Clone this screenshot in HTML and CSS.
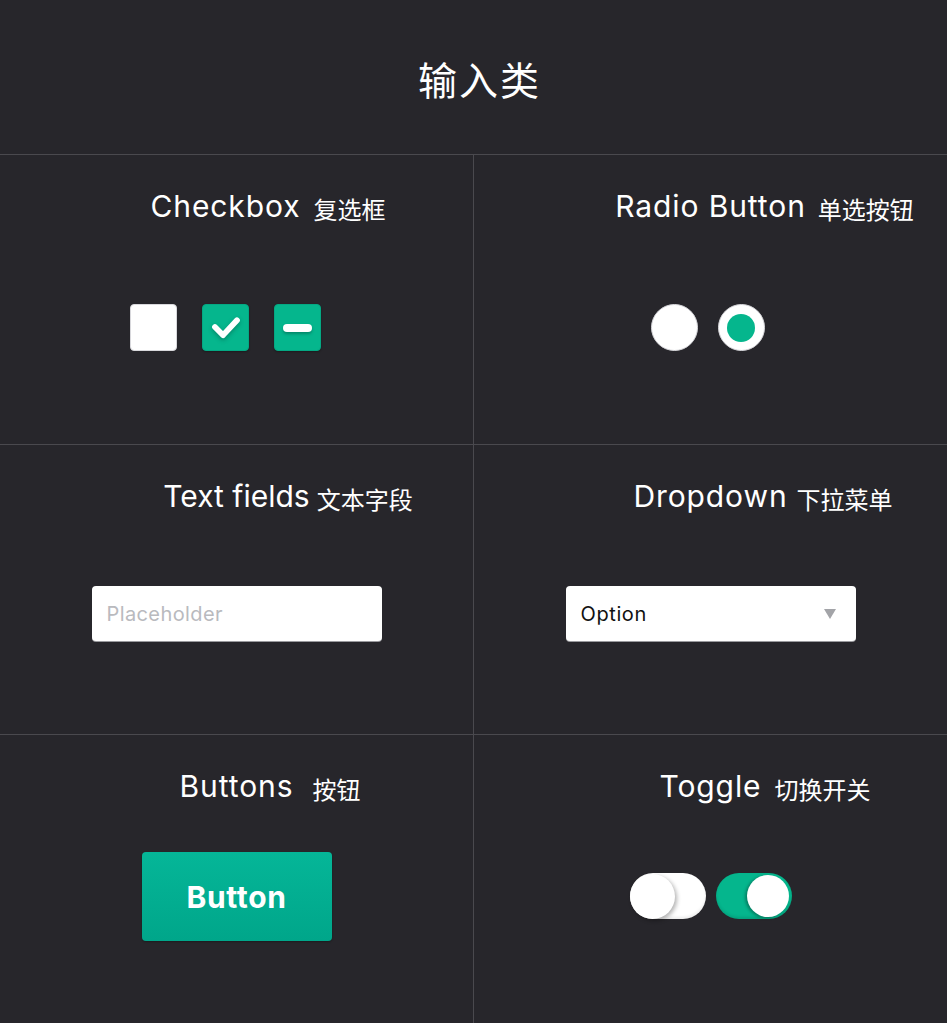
FILE: index.html
```html
<!DOCTYPE html>
<html lang="zh">
<head>
<meta charset="utf-8">
<title>输入类</title>
<link rel="stylesheet" href="styles.css">
</head>
<body>
<header class="page-head"><h1 class="page-title">输入类</h1></header>
<main class="grid">
  <section class="cell">
    <div class="label"><span></span><span class="en en-checkbox">Checkbox</span><span class="zh zh-checkbox">复选框</span></div>
    <div class="content content-check">
      <span class="cb"></span>
      <span class="cb cb-on"><svg width="47" height="47" viewBox="0 0 47 47"><path d="M12.5 23 L21 31.5 L35.5 16" fill="none" stroke="#fff" stroke-width="6" stroke-linecap="round" stroke-linejoin="round"/></svg></span>
      <span class="cb cb-on"><span class="minus"></span></span>
    </div>
  </section>
  <section class="cell">
    <div class="label"><span></span><span class="en">Radio Button</span><span class="zh zh-radio">单选按钮</span></div>
    <div class="content content-radio">
      <span class="radio"></span>
      <span class="radio radio-on"><span class="dot"></span></span>
    </div>
  </section>
  <section class="cell">
    <div class="label"><span></span><span class="en en-text">Text fields</span><span class="zh zh-text">文本字段</span></div>
    <div class="content content-field">
      <div class="field"><span class="placeholder">Placeholder</span></div>
    </div>
  </section>
  <section class="cell">
    <div class="label"><span></span><span class="en">Dropdown</span><span class="zh zh-drop">下拉菜单</span></div>
    <div class="content content-field">
      <div class="field field-drop"><span class="option">Option</span><span class="caret"></span></div>
    </div>
  </section>
  <section class="cell cell-last">
    <div class="label"><span></span><span class="en">Buttons</span><span class="zh zh-btn">按钮</span></div>
    <div class="content content-button">
      <button class="btn">Button</button>
    </div>
  </section>
  <section class="cell cell-last">
    <div class="label"><span></span><span class="en">Toggle</span><span class="zh zh-toggle">切换开关</span></div>
    <div class="content content-toggle">
      <span class="toggle"><span class="knob"></span></span>
      <span class="toggle toggle-on"><span class="knob"></span></span>
    </div>
  </section>
</main>
</body>
</html>
```
FILE: styles.css
```css
* { box-sizing: border-box; }
html, body { margin: 0; padding: 0; }
body {
  width: 947px;
  height: 1023px;
  overflow: hidden;
  background: #27262b;
  color: #fff;
  font-family: Inter, "Noto Sans CJK SC", sans-serif;
}
.page-head {
  height: 155px;
  border-bottom: 1px solid #4a494e;
  display: flex;
  align-items: center;
  justify-content: center;
}
.page-title {
  margin: 0;
  padding-top: 2px;
  padding-left: 12px;
  font-family: "Noto Sans CJK SC", sans-serif;
  font-weight: 400;
  font-size: 39px;
  letter-spacing: 2px;
  color: #fff;
}
.grid {
  display: grid;
  grid-template-columns: 474px 473px;
  grid-template-rows: 290px 290px 288px;
}
.cell {
  border-bottom: 1px solid #4a494e;
  display: flex;
  flex-direction: column;
}
.cell:nth-child(odd) { border-right: 1px solid #4a494e; }
.cell-last { border-bottom: none; }
.label {
  display: grid;
  grid-template-columns: 1fr auto 1fr;
  align-items: center;
  height: 40px;
  margin-top: 31px;
}
.en {
  font-family: Inter, sans-serif;
  font-size: 30px;
  font-weight: 400;
  letter-spacing: 0.9px;
  white-space: nowrap;
}
.en-checkbox { margin-right: 22px; }
.en-text { letter-spacing: 0; }
.zh {
  font-family: "Noto Sans CJK SC", sans-serif;
  font-size: 24px;
  white-space: nowrap;
  padding-top: 4px;
}
.zh-checkbox { margin-left: -9px; }
.zh-radio { margin-left: 12px; }
.zh-text { margin-left: 7px; }
.zh-drop { margin-left: 9px; }
.zh-btn { margin-left: 19px; }
.zh-toggle { margin-left: 13px; }

.content { display: flex; justify-content: center; }
.content-check { margin-top: 78px; gap: 25px; padding-right: 22px; }
.content-radio { margin-top: 78px; gap: 20px; padding-right: 6px; }
.content-field { margin-top: 70px; }
.content-button { margin-top: 46px; }
.content-toggle { margin-top: 67px; gap: 10px; }

.cb {
  width: 47px;
  height: 47px;
  border-radius: 4px;
  background: #fff;
  border: 1px solid #d8d8dc;
  display: flex;
  align-items: center;
  justify-content: center;
}
.cb-on {
  background: #05b68d;
  border: 1px solid #04a883;
  box-shadow: 0 1px 2px rgba(0,0,0,0.3);
}
.cb svg { display: block; filter: drop-shadow(0 2px 2px rgba(0,0,0,0.25)); }
.minus {
  width: 29px;
  height: 8px;
  border-radius: 4px;
  background: #fff;
  box-shadow: 0 2px 3px rgba(0,0,0,0.25);
}
.radio {
  width: 47px;
  height: 47px;
  border-radius: 50%;
  background: #fff;
  border: 1px solid #d8d8dc;
  display: flex;
  align-items: center;
  justify-content: center;
}
.dot {
  width: 28px;
  height: 28px;
  border-radius: 50%;
  background: #05b68d;
}
.field {
  width: 290px;
  height: 55px;
  background: #fff;
  border-radius: 4px;
  display: flex;
  align-items: center;
  padding: 0 15px;
  box-shadow: 0 1px 0 #9a9a9e;
}
.placeholder {
  font-family: Inter, sans-serif;
  font-size: 20px;
  letter-spacing: 0.4px;
  color: #b9babe;
}
.field-drop { justify-content: space-between; padding-right: 20px; }
.option {
  font-family: Inter, sans-serif;
  font-size: 20px;
  letter-spacing: 0.6px;
  color: #111;
}
.caret {
  width: 0;
  height: 0;
  border-left: 6px solid transparent;
  border-right: 6px solid transparent;
  border-top: 10px solid #a3a4a8;
}
.btn {
  width: 190px;
  height: 89px;
  border: none;
  border-radius: 4px;
  background: linear-gradient(#05b698, #00a68a);
  color: #fff;
  font-family: Inter, sans-serif;
  font-weight: 700;
  font-size: 30px;
  letter-spacing: 0.6px;
  box-shadow: 0 1px 2px rgba(0,0,0,0.3);
  padding: 0;
}
.toggle {
  width: 76px;
  height: 46px;
  border-radius: 23px;
  background: #fff;
  display: flex;
  align-items: center;
  padding: 0;
  box-shadow: inset 0 -2px 3px rgba(0,0,0,0.08);
}
.toggle .knob {
  width: 45px;
  height: 45px;
  border-radius: 50%;
  background: #fff;
  box-shadow: 2px 2px 4px rgba(0,0,0,0.3);
}
.toggle-on {
  background: #05b68d;
  justify-content: flex-end;
  padding-right: 3px;
  box-shadow: inset 0 -2px 3px rgba(0,0,0,0.12);
}
.toggle-on .knob {
  width: 42px;
  height: 42px;
  box-shadow: -2px 1px 3px rgba(0,0,0,0.3);
}
```
